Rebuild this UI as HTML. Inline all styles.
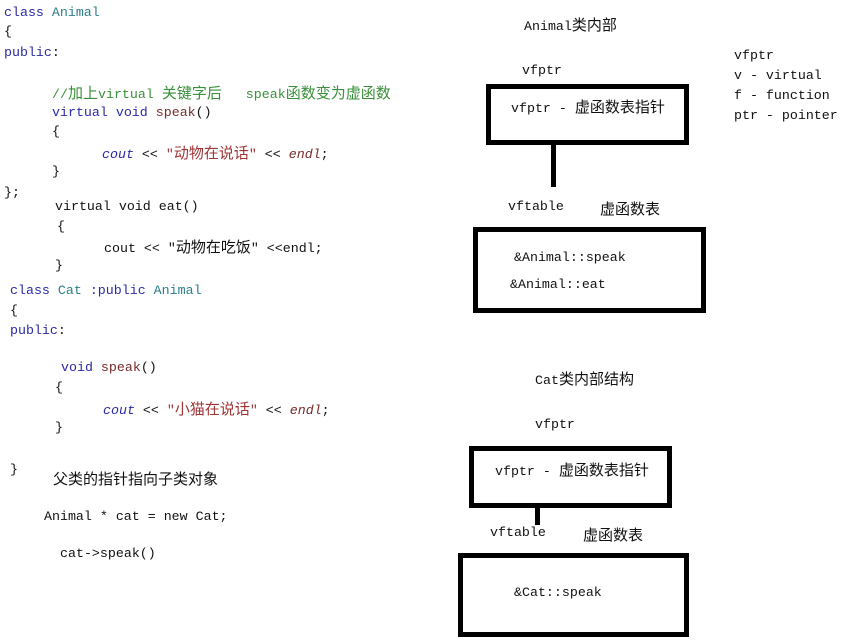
<!DOCTYPE html>
<html><head><meta charset="utf-8"><style>
body{margin:0;width:842px;height:643px;background:#fff;position:relative;overflow:hidden;font-family:"Liberation Mono","Noto Sans CJK SC",monospace;font-size:13.3px;color:#111}
.l{position:absolute;white-space:pre;line-height:16px}
.c{font-family:"Noto Sans CJK SC",sans-serif;font-size:15px}
.k{color:#2a2aa8}.t{color:#2b7f8a}.g{color:#3a8f3a}.f{color:#7a2a2a}.s{color:#a03535}.i{font-style:italic}
.b{position:absolute;border:5px solid #000;box-sizing:border-box}
.v{position:absolute;background:#000}
</style></head><body>
<div class="l" style="left:4px;top:5px"><span class="k">class</span> <span class="t">Animal</span></div>
<div class="l" style="left:4px;top:24px">{</div>
<div class="l" style="left:4px;top:45px"><span class="k">public</span>:</div>
<div class="l g" style="left:52px;top:85px">//<span class="c">加上</span>virtual <span class="c">关键字后</span>   speak<span class="c">函数变为虚函数</span></div>
<div class="l" style="left:52px;top:105px"><span class="k">virtual void</span> <span class="f">speak</span>()</div>
<div class="l" style="left:52px;top:124px">{</div>
<div class="l" style="left:102px;top:145px"><span class="k i">cout</span> &lt;&lt; <span class="s">"<span class="c">动物在说话</span>"</span> &lt;&lt; <span class="f i">endl</span>;</div>
<div class="l" style="left:52px;top:164px">}</div>
<div class="l" style="left:4px;top:185px">};</div>
<div class="l" style="left:55px;top:199px">virtual void eat()</div>
<div class="l" style="left:57px;top:219px">{</div>
<div class="l" style="left:104px;top:239px">cout &lt;&lt; "<span class="c">动物在吃饭</span>" &lt;&lt;endl;</div>
<div class="l" style="left:55px;top:258px">}</div>
<div class="l" style="left:10px;top:283px"><span class="k">class</span> <span class="t">Cat</span> <span class="k">:public</span> <span class="t">Animal</span></div>
<div class="l" style="left:10px;top:303px">{</div>
<div class="l" style="left:10px;top:323px"><span class="k">public</span>:</div>
<div class="l" style="left:61px;top:360px"><span class="k">void</span> <span class="f">speak</span>()</div>
<div class="l" style="left:55px;top:380px">{</div>
<div class="l" style="left:103px;top:401px"><span class="k i">cout</span> &lt;&lt; <span class="s">"<span class="c">小猫在说话</span>"</span> &lt;&lt; <span class="f i">endl</span>;</div>
<div class="l" style="left:55px;top:420px">}</div>
<div class="l" style="left:10px;top:462px">}</div>
<div class="l c" style="left:53px;top:471px">父类的指针指向子类对象</div>
<div class="l" style="left:44px;top:509px">Animal * cat = new Cat;</div>
<div class="l" style="left:60px;top:546px">cat-&gt;speak()</div>

<div class="l" style="left:524px;top:17px">Animal<span class="c">类内部</span></div>
<div class="l" style="left:522px;top:63px">vfptr</div>
<div class="l" style="left:734px;top:46px;line-height:20px">vfptr
v - virtual
f - function
ptr - pointer</div>
<div class="b" style="left:486px;top:84px;width:203px;height:61px"></div>
<div class="l" style="left:511px;top:99px">vfptr - <span class="c">虚函数表指针</span></div>
<div class="v" style="left:551px;top:144px;width:5px;height:43px"></div>
<div class="l" style="left:508px;top:199px">vftable</div>
<div class="l c" style="left:600px;top:201px">虚函数表</div>
<div class="b" style="left:473px;top:227px;width:233px;height:86px"></div>
<div class="l" style="left:514px;top:250px">&amp;Animal::speak</div>
<div class="l" style="left:510px;top:277px">&amp;Animal::eat</div>

<div class="l" style="left:535px;top:371px">Cat<span class="c">类内部结构</span></div>
<div class="l" style="left:535px;top:417px">vfptr</div>
<div class="b" style="left:469px;top:446px;width:203px;height:62px"></div>
<div class="l" style="left:495px;top:462px">vfptr - <span class="c">虚函数表指针</span></div>
<div class="v" style="left:535px;top:506px;width:5px;height:19px"></div>
<div class="l" style="left:490px;top:525px">vftable</div>
<div class="l c" style="left:583px;top:527px">虚函数表</div>
<div class="b" style="left:458px;top:553px;width:231px;height:84px"></div>
<div class="l" style="left:514px;top:585px">&amp;Cat::speak</div>
</body></html>
